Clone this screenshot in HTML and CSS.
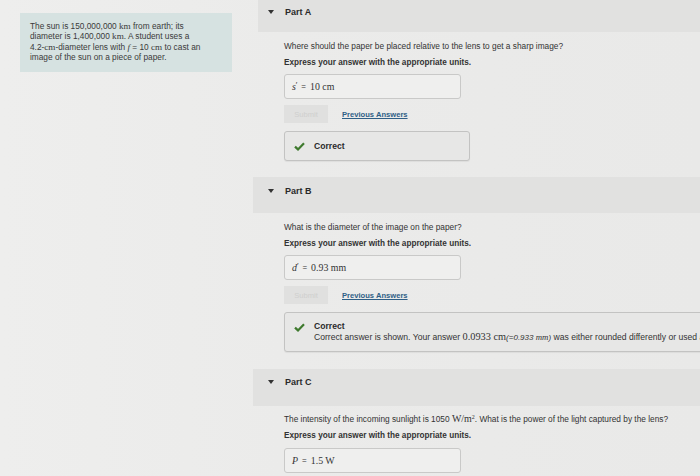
FILE: index.html
```html
<!DOCTYPE html>
<html>
<head>
<meta charset="utf-8">
<link rel="stylesheet" href="styles.css">
</head>
<body>
<div class="page">
  <aside class="side">
    <div class="problem">The sun is 150,000,000 <span class="m">km</span> from earth; its<br>diameter is 1,400,000 <span class="m">km</span>. A student uses a<br>4.2-<span class="m">cm</span>-diameter lens with <span class="mi">f</span> = 10 <span class="m">cm</span> to cast an<br>image of the sun on a piece of paper.</div>
  </aside>
  <main class="main">
    <section class="part part-a">
      <div class="head"><span class="tri"></span><span class="title">Part A</span></div>
      <div class="body">
        <p class="q">Where should the paper be placed relative to the lens to get a sharp image?</p>
        <p class="ex">Express your answer with the appropriate units.</p>
        <div class="input"><span class="mi">s</span><span class="pr">′</span><span class="eq">=</span><span class="m">10 cm</span></div>
        <div class="actions"><span class="submit">Submit</span><a class="prev">Previous Answers</a></div>
        <div class="fb short"><span class="check"><svg width="11" height="9" viewBox="0 0 11 9"><path d="M1 4.6 L4 7.4 L10 1.2" fill="none" stroke="#3f7a2e" stroke-width="2.2"/></svg></span><div class="fbt"><b>Correct</b></div></div>
      </div>
    </section>
    <section class="part part-b">
      <div class="head"><span class="tri"></span><span class="title">Part B</span></div>
      <div class="body">
        <p class="q">What is the diameter of the image on the paper?</p>
        <p class="ex">Express your answer with the appropriate units.</p>
        <div class="input"><span class="mi">d</span><span class="pr">′</span><span class="eq">=</span><span class="m">0.93 mm</span></div>
        <div class="actions"><span class="submit">Submit</span><a class="prev">Previous Answers</a></div>
        <div class="fb wide"><span class="check"><svg width="11" height="9" viewBox="0 0 11 9"><path d="M1 4.6 L4 7.4 L10 1.2" fill="none" stroke="#3f7a2e" stroke-width="2.2"/></svg></span><div class="fbt"><b>Correct</b><span class="note">Correct answer is shown. Your answer <span class="m big">0.0933 cm</span><span class="alt">(=0.933 <span class="m">mm</span>)</span> was either rounded differently or used a different number of significant figures than required for this part.</span></div></div>
      </div>
    </section>
    <section class="part part-c">
      <div class="head"><span class="tri"></span><span class="title">Part C</span></div>
      <div class="body">
        <p class="q">The intensity of the incoming sunlight is 1050 <span class="m big">W/m<sup>2</sup></span>. What is the power of the light captured by the lens?</p>
        <p class="ex">Express your answer with the appropriate units.</p>
        <div class="input"><span class="mi">P</span><span class="eq">=</span><span class="m">1.5 W</span></div>
      </div>
    </section>
  </main>
</div>
</body>
</html>
```
FILE: styles.css
```css
html, body {
  margin: 0;
  padding: 0;
}
body {
  width: 700px;
  height: 476px;
  overflow: hidden;
  background: linear-gradient(90deg, #eeeeed 0%, #ebebea 40%, #e9e9e8 100%);
  font-family: "Liberation Sans", Arial, sans-serif;
  color: #2b2b2b;
}
.page {
  display: flex;
  height: 476px;
}
.side {
  width: 238px;
  padding: 13px 0 0 20px;
  flex: none;
}
.problem {
  width: 202px;
  height: 48px;
  padding: 8px 0 3px 10px;
  background: #d6e2e1;
  font-size: 8.3px;
  line-height: 10.4px;
  color: #3a3a3a;
  white-space: nowrap;
}
.m {
  font-family: "Liberation Serif", "Times New Roman", serif;
  font-size: 1.1em;
}
.m.big { font-size: 1.2em; }
.mi {
  font-family: "Liberation Serif", "Times New Roman", serif;
  font-style: italic;
  font-size: 1.1em;
}
sup { font-size: 0.6em; vertical-align: 0.5em; line-height: 0; }
.main {
  flex: 1;
  min-width: 0;
}
.head {
  display: flex;
  align-items: flex-start;
  background: #e1e1e0;
  padding-left: 10px;
  gap: 11px;
  font-size: 9px;
  line-height: 10px;
  color: #2a2a2a;
  box-sizing: border-box;
}
.tri {
  width: 0;
  height: 0;
  margin-top: 3px;
  border-left: 3px solid transparent;
  border-right: 3px solid transparent;
  border-top: 4px solid #333;
}
.title { font-weight: bold; }
.part-a .head { height: 32px; padding-top: 7px; }
.part-b { margin-top: 16px; }
.part-b .head { height: 36px; margin-left: -5px; padding-left: 15px; padding-top: 9px; }
.part-c { margin-top: 17px; }
.part-c .head { height: 37px; margin-left: -5px; padding-left: 15px; padding-top: 8px; }
.body {
  padding-left: 26px;
}
p { margin: 0; }
.q {
  font-size: 8.3px;
  line-height: 10px;
  color: #333;
  white-space: nowrap;
}
.ex {
  font-size: 8.2px;
  font-weight: bold;
  line-height: 10px;
  color: #333;
  margin-top: 7px;
}
.part-a .q { margin-top: 9px; }
.part-b .q { margin-top: 9px; }
.part-c .q { margin-top: 8px; }
.input {
  box-sizing: border-box;
  width: 177px;
  height: 25px;
  margin-top: 6px;
  border: 1px solid #c9c9c8;
  border-radius: 3px;
  background: #efefee;
  display: flex;
  align-items: center;
  padding-left: 7px;
  font-size: 9px;
  color: #333;
  white-space: pre;
}
.part-c .input { margin-top: 7px; }
.input .pr { font-size: 8px; margin: -4px 0 0 0; }
.input .eq { font-size: 8px; padding: 0 4px 0 4px; font-family: "Liberation Sans", Arial, sans-serif; }
.actions {
  display: flex;
  align-items: center;
  gap: 14px;
  margin-top: 6px;
  height: 18px;
}
.submit {
  width: 44px;
  height: 18px;
  background: #e0e0df;
  color: #cfcfce;
  font-size: 7.6px;
  display: flex;
  align-items: center;
  justify-content: center;
}
.prev {
  color: #2f5f86;
  font-weight: bold;
  text-decoration: underline;
  font-size: 7.6px;
}
.fb {
  box-sizing: border-box;
  margin-top: 8px;
  border: 1px solid #c3c3c2;
  border-radius: 3px;
  background: #e7e7e6;
  box-shadow: 0 1px 1px rgba(0,0,0,0.06);
  display: flex;
  align-items: flex-start;
  padding-left: 9px;
  color: #2a2a2a;
}
.fb.short {
  width: 186px;
  height: 30px;
  align-items: center;
}
.fb.wide {
  width: 440px;
  height: 40px;
  padding-top: 8px;
  overflow: hidden;
}
.check { width: 20px; flex: none; display: flex; }
.fb.wide .check { padding-top: 2px; }
.fbt {
  font-size: 8.6px;
  line-height: 10px;
  white-space: nowrap;
}
.fbt b { display: block; }
.note {
  display: block;
  font-size: 8.6px;
  line-height: 11px;
  color: #333;
}
.alt {
  font-style: italic;
  font-size: 8px;
}
```
